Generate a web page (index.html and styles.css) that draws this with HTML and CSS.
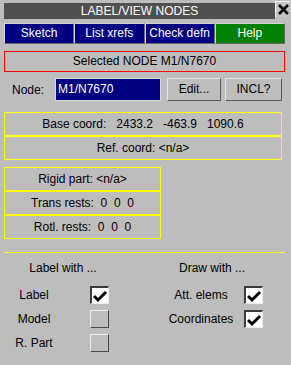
FILE: index.html
```html
<!DOCTYPE html>
<html lang="en">
  <head>
    <meta charset="UTF-8" />
    <title>LABEL/VIEW NODES</title>
    <link rel="stylesheet" href="styles.css">
  </head>
  <body>
    <div class="panel">
      <div class="header">
        <div class="title">LABEL/VIEW NODES</div>
        <div class="close">
          <svg width="13" height="13" viewBox="0 0 13 13"><path d="M2 2 L11 11 M11 2 L2 11" stroke="#000" stroke-width="2.6" /></svg>
        </div>
      </div>
      <div class="tabs">
        <div class="tab bg-blue">Sketch</div>
        <div class="tab bg-blue">List xrefs</div>
        <div class="tab bg-blue">Check defn</div>
        <div class="tab bg-green">Help</div>
      </div>
      <div class="selected">Selected NODE M1/N7670</div>
      <div class="node-row">
        <span class="node-label">Node:</span>
        <div class="node-input">M1/N7670</div>
        <div class="btn btn-edit">Edit...</div>
        <div class="btn btn-incl">INCL?</div>
      </div>
      <div class="coords">
        <div class="ybox">Base coord:   2433.2   -463.9   1090.6</div>
        <div class="ybox">Ref. coord: &lt;n/a&gt;</div>
      </div>
      <div class="rests">
        <div class="ybox">Rigid part: &lt;n/a&gt;</div>
        <div class="ybox">Trans rests:  0  0  0</div>
        <div class="ybox">Rotl. rests:  0  0  0</div>
      </div>
      <div class="sep"></div>
      <div class="opts">
        <div class="col col-left">
          <div class="col-head">Label with ...</div>
          <div class="opt"><span class="opt-label">Label</span><span class="check on"><svg width="15" height="14" viewBox="0 0 15 14"><path d="M1 7 L5 11 L13 3" fill="none" stroke="#000" stroke-width="3" /></svg></span></div>
          <div class="opt"><span class="opt-label">Model</span><span class="check"></span></div>
          <div class="opt"><span class="opt-label">R. Part</span><span class="check"></span></div>
        </div>
        <div class="col col-right">
          <div class="col-head">Draw with ...</div>
          <div class="opt"><span class="opt-label">Att. elems</span><span class="check on"><svg width="15" height="14" viewBox="0 0 15 14"><path d="M1 7 L5 11 L13 3" fill="none" stroke="#000" stroke-width="3" /></svg></span></div>
          <div class="opt"><span class="opt-label">Coordinates</span><span class="check on"><svg width="15" height="14" viewBox="0 0 15 14"><path d="M1 7 L5 11 L13 3" fill="none" stroke="#000" stroke-width="3" /></svg></span></div>
        </div>
      </div>
    </div>
  </body>
</html>
```

FILE: styles.css
```css
*, *:before, *:after {
  box-sizing: border-box;
}
html, body {
  margin: 0;
  background: #bdbdbd;
}
body {
  font-family: "Liberation Sans", Arial, sans-serif;
  font-size: 12px;
  color: #000;
  width: 291px;
  height: 365px;
  overflow: hidden;
}
.panel {
  padding: 1px 0 0 4px;
}
.header {
  display: flex;
  align-items: flex-start;
  height: 18px;
}
.title {
  width: 271px;
  height: 16px;
  margin-top: 2px;
  background: #505050;
  color: #fff;
  text-align: center;
  line-height: 16px;
}
.close {
  width: 15px;
  height: 16px;
  background: #c4c4c4;
  border-top: 1px solid #f4f4f4;
  border-left: 1px solid #f4f4f4;
  display: flex;
  align-items: center;
  justify-content: center;
}
.tabs {
  display: flex;
  width: 281px;
  margin-top: 4px;
}
.tab {
  flex: 1;
  height: 21px;
  line-height: 19px;
  text-align: center;
  color: #fff;
  border: 1px solid;
  border-color: #d4d4d4 #6a6a6a #6a6a6a #d4d4d4;
}
.bg-blue {
  background: #000080;
}
.bg-green {
  background: #008000;
}
.selected {
  width: 281px;
  height: 21px;
  margin-top: 7px;
  border: 1px solid #ff0000;
  text-align: center;
  line-height: 19px;
}
.node-row {
  display: flex;
  align-items: center;
  margin-top: 6px;
  padding-left: 8px;
  height: 23px;
}
.node-label {
  width: 43px;
}
.node-input {
  width: 106px;
  height: 23px;
  background: #000080;
  color: #fff;
  border: 1px solid #d8d8d8;
  padding-left: 2px;
  line-height: 21px;
}
.btn {
  height: 23px;
  line-height: 21px;
  text-align: center;
  border: 1px solid;
  border-color: #e6e6e6 #5a5a5a #5a5a5a #e6e6e6;
}
.btn-edit {
  width: 54px;
  margin-left: 6px;
}
.btn-incl {
  width: 57px;
  margin-left: 4px;
}
.coords {
  width: 278px;
  margin-top: 11px;
}
.rests {
  width: 157px;
  margin-top: 7px;
}
.ybox {
  height: 24px;
  border: 1px solid #ffff00;
  text-align: center;
  line-height: 22px;
  white-space: pre;
}
.sep {
  width: 281px;
  height: 1px;
  margin-top: 13px;
  background: #ffff00;
}
.opts {
  display: flex;
  margin-top: 7px;
}
.col {
  display: flex;
  flex-direction: column;
  gap: 6px;
}
.col-left {
  width: 118px;
}
.col-right {
  width: 146px;
  margin-left: 17px;
}
.col-head {
  text-align: center;
  line-height: 16px;
  margin-bottom: 4px;
}
.opt {
  display: flex;
  align-items: center;
  height: 18px;
}
.col-left .opt-label {
  width: 60px;
  text-align: center;
  margin-right: 26px;
}
.col-right .opt-label {
  width: 76px;
  margin-left: 24px;
  text-align: center;
  margin-right: 5px;
}
.check {
  width: 19px;
  height: 18px;
  display: flex;
  align-items: center;
  justify-content: center;
  border: 1px solid;
  border-color: #ececec #4a4a4a #4a4a4a #ececec;
}
.check.on {
  background: #fff;
  border-color: #3a3a3a #f0f0f0 #f0f0f0 #3a3a3a;
  border-width: 2px 1px 1px 2px;
}
```
